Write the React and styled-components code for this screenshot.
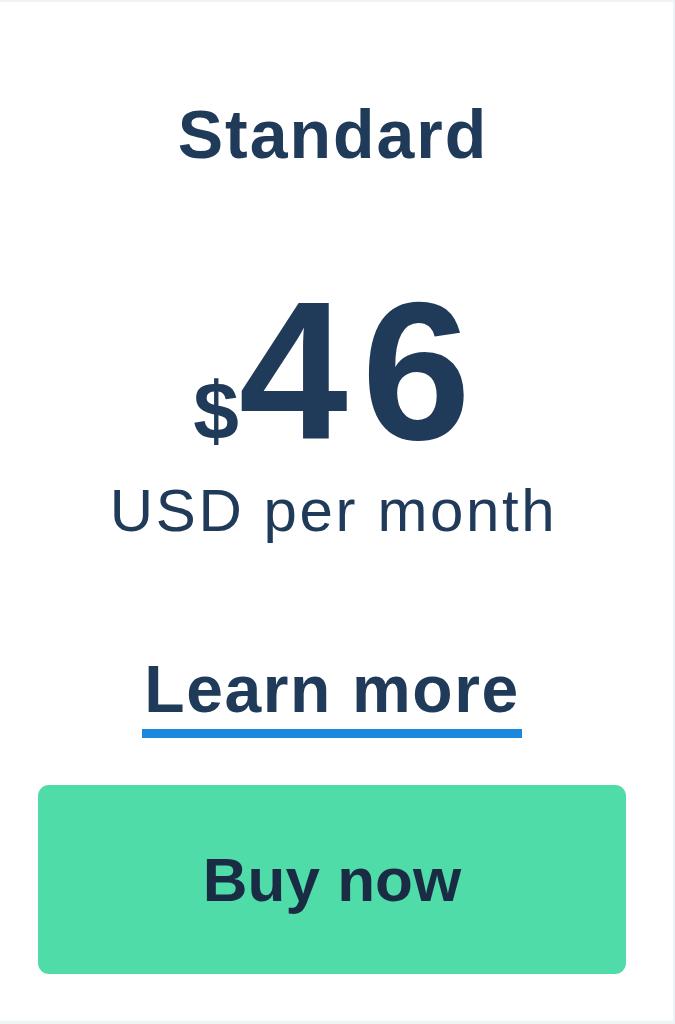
import React from 'react'
import styled, { createGlobalStyle } from 'styled-components'

const Global = createGlobalStyle`
  html, body {
    margin: 0;
    padding: 0;
    background: #ffffff;
  }
  body {
    font-family: "Liberation Sans", Arial, sans-serif;
    color: #203a59;
  }
`

const Card = styled.section`
  box-sizing: border-box;
  width: 675px;
  height: 1024px;
  display: flex;
  flex-direction: column;
  align-items: center;
  background: #ffffff;
  border-top: 2px solid #eef3f5;
  border-right: 2px solid #eef3f5;
  border-bottom: 3px solid #eef3f5;
  padding: 92px 47px 0 38px;
`

const PlanName = styled.h2`
  margin: 0 -2px 0 0;
  font-size: 68px;
  line-height: 80px;
  font-weight: 700;
  letter-spacing: 2px;
  color: #203a59;
`

const PriceRow = styled.div`
  display: flex;
  align-items: baseline;
  margin-top: 118px;
  height: 160px;
  line-height: 160px;
`

const Currency = styled.span`
  font-size: 82px;
  font-weight: 700;
`

const Amount = styled.span`
  font-size: 196px;
  font-weight: 700;
  letter-spacing: 14px;
  margin-right: -14px;
`

const Period = styled.div`
  margin: 24px -3px 0 0;
  font-size: 60px;
  line-height: 70px;
  font-weight: 400;
  letter-spacing: 2.6px;
`

const LearnLink = styled.a`
  margin-top: 107px;
  padding: 0 2px 4px;
  font-size: 66px;
  line-height: 72px;
  font-weight: 700;
  letter-spacing: 1.6px;
  color: #203a59;
  text-decoration: none;
  border-bottom: 9px solid #1a88dd;
`

const BuyButton = styled.button`
  margin-top: 47px;
  width: 588px;
  height: 189px;
  border: none;
  border-radius: 11px;
  background: #50dca9;
  color: #1a2b44;
  font-family: "Liberation Sans", Arial, sans-serif;
  font-size: 62px;
  font-weight: 700;
  cursor: pointer;
`

export default function App() {
  return (
    <>
      <Global />
      <Card>
        <PlanName>Standard</PlanName>
        <PriceRow>
          <Currency>$</Currency>
          <Amount>46</Amount>
        </PriceRow>
        <Period>USD per month</Period>
        <LearnLink href="#">Learn more</LearnLink>
        <BuyButton>Buy now</BuyButton>
      </Card>
    </>
  )
}
